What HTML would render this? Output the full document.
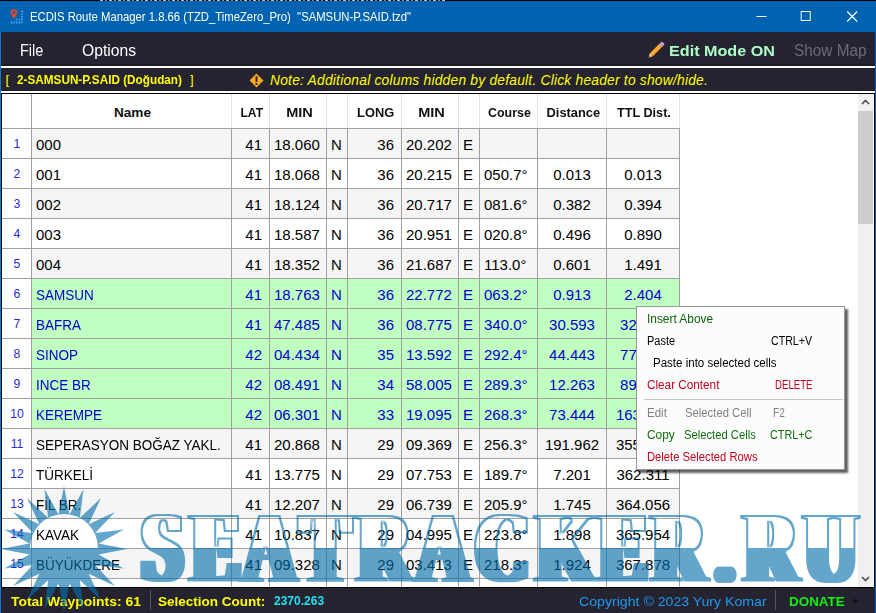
<!DOCTYPE html>
<html lang="en"><head><meta charset="utf-8"><title>ECDIS Route Manager</title>
<style>
*{box-sizing:border-box;margin:0;padding:0}
html,body{width:876px;height:613px;overflow:hidden;background:#0063b1;font-family:"Liberation Sans",sans-serif}
#win{position:absolute;left:0;top:0;width:876px;height:613px;overflow:hidden;background:#0063b1}#lb{left:0;top:32px;width:1px;height:581px;background:#1478cc}
.abs{position:absolute}
#topstrip{left:0;top:0;width:876px;height:1px;background:#000}
#topdots{left:100px;top:0;width:345px;height:1px;background:repeating-linear-gradient(90deg,#bbb 0 3px,#111 3px 5px,#888 5px 7px,#000 7px 9px)}
#title{left:0;top:1px;width:876px;height:31px;background:#0063b1;color:#fff}
#title .t{position:absolute;left:30px;top:0;line-height:33px;font-size:12.4px;white-space:pre;transform-origin:0 50%;transform:scaleX(.912)}
#menubar{left:1px;top:32px;width:874px;height:34px;background:#25232f;border-bottom:2px solid #1c1b24;color:#fff}
#menubar span{position:absolute;top:0;line-height:37px;font-size:15.2px;white-space:pre;transform-origin:0 50%}
#wl1{left:1px;top:66px;width:874px;height:2px;background:#fff}
#routebar{left:1px;top:68px;width:874px;height:23px;background:#25232f;border-bottom:1px solid #1c1b24;color:#ffff00}
#routebar span{position:absolute;top:0;line-height:24px;white-space:pre;transform-origin:0 50%}
#wl2{left:1px;top:91px;width:874px;height:2px;background:#fff}
#grid{left:1px;top:93px;width:874px;height:495px;background:#fff;border:1px solid #000;border-right:1px solid #000;overflow:hidden}
#gi{position:absolute;left:-2px;top:-94px;width:876px;height:613px}
.hc{position:absolute;top:94px;height:34px;line-height:37px;padding-left:2px;text-align:center;font-weight:bold;font-size:13.6px;color:#111;white-space:pre}
.hc b{display:inline-block}.hv{position:absolute;top:94px;width:1px;height:34px;background:#e2e2e2}
#hline{left:2px;top:128px;width:678px;height:1px;background:#a0a0a0}
.row{position:absolute;left:0;width:680px;height:30px;border-bottom:1px solid #a0a0a0;color:#000}
.row .bg{position:absolute;left:32px;top:0;width:647px;height:29px}
.row.odd .bg{background:#f5f5f5}
.row.sel .bg{background:#c0ffc0}
.row.sel{color:#0000cd}
.rh{position:absolute;left:2px;width:29px;top:0;height:29px;line-height:31px;text-align:center;color:#2828e0;font-size:12.2px;background:#fff;padding-left:1px}
.c{position:absolute;top:0;height:29px;line-height:31px;font-size:15px;white-space:pre;padding:0 4px}
.c.al{text-align:left}.c i{font-style:normal;display:inline-block;transform:scaleX(.9);transform-origin:0 50%}.c.ar{text-align:right;padding-right:7px}.c.ac{text-align:center}
.v{position:absolute;top:129px;width:1px;height:460px;background:#a0a0a0}
#sb{left:858px;top:94px;width:15px;height:493px;background:#f0f0f0}
#thumb{left:858px;top:111px;width:15px;height:113px;background:#cdcdcd}
#status{left:1px;top:588px;width:874px;height:25px;background:#25232f;color:#ffff00}
#status span{position:absolute;top:0;line-height:27px;white-space:pre;transform-origin:0 50%}
.sep{position:absolute;width:1px;background:#55545e}
#ctx{left:636px;top:306px;width:209px;height:164px;background:#fcfcfc;border:1px solid #979797;box-shadow:3px 3px 2px rgba(0,0,0,.62);font-size:12px}
#ctx span{position:absolute;line-height:22px;white-space:pre;transform-origin:0 50%}
#ctx .s{position:absolute;left:7px;top:92px;width:199px;height:1px;background:#c8c8c8}
</style></head><body>
<div id="win">
<div id="topstrip" class="abs"></div><div id="lb" class="abs"></div><div id="topdots" class="abs"></div>
<div id="title" class="abs">
<svg class="abs" style="left:9px;top:7px" width="16" height="17" viewBox="0 0 16 17"><path d="M5 1.2a3.3 3.3 0 0 1 3.3 3.3c0 2.2-3.3 6-3.3 6s-3.3-3.800-3.300-6a3.300 3.300 0 0 1 3.300-3.300z" fill="#e8461e"/><circle cx="5" cy="4.400" r="1.300" fill="#0063b1"/><path d="M2 14.500h11M13 14.500v-12" stroke="#5cabf5" stroke-width="1.800" stroke-dasharray="1.300 1.300" fill="none"/><path d="M7 11.500h4" stroke="#5cabf5" stroke-width="1.500" stroke-dasharray="1.300 1.300"/></svg>
<div class="t">ECDIS Route Manager 1.8.66 (TZD_TimeZero_Pro)  "SAMSUN-P.SAID.tzd"</div>
<svg class="abs" style="left:740px;top:0" width="136" height="31" viewBox="0 0 136 31"><path d="M16.500 15.500h10" stroke="#fff" stroke-width="1"/><rect x="61.200" y="10.500" width="9" height="9" fill="none" stroke="#fff" stroke-width="1"/><path d="M107.200 10.500l10 10M117.200 10.500l-10 10" stroke="#fff" stroke-width="1.100"/></svg>
</div>
<div id="menubar" class="abs">
<span style="left:19px;transform:scaleX(0.903);font-size:16px">File</span><span style="left:81px;transform:scaleX(0.98);font-size:16px">Options</span>
<svg class="abs" style="left:646px;top:9px" width="18" height="18" viewBox="0 0 18 18"><path d="M2.800 12.300L11.800 3.300l3 3L5.800 15.300z" fill="#ffa01e"/><path d="M4 13.500L13 4.500" stroke="#ffc060" stroke-width="1"/><path d="M11.800 3.300l1.300-1.300 3 3-1.300 1.300z" fill="#b8b8c0"/><path d="M13.100 2l1-1a1 1 0 0 1 1.400 0l1.600 1.600a1 1 0 0 1 0 1.400l-1 1z" fill="#e88fd0"/><path d="M2.800 12.300l3 3-4.200 1.200z" fill="#f3c98a"/><path d="M1.600 16.500l0.400-1.600 1.200 1.200z" fill="#555"/></svg>
<span style="left:668px;font-weight:bold;color:#aefcc8;transform:scaleX(1.064)">Edit Mode ON</span>
<span style="left:793px;color:#6b6a76;transform:scaleX(0.959);font-size:16px">Show Map</span>
</div>
<div id="wl1" class="abs"></div>
<div id="routebar" class="abs">
<span style="left:4.500px;font-size:13px">[</span><span style="left:16px;font-weight:bold;font-size:12.6px;transform:scaleX(0.933)">2-SAMSUN-P.SAID (Doğudan)</span><span style="left:189px;font-size:13px">]</span>
<svg class="abs" style="left:248px;top:4.500px" width="15" height="15" viewBox="0 0 16 16"><path d="M8 0.500L15.500 8 8 15.500 0.500 8z" fill="#f5a623"/><rect x="7" y="3.500" width="2" height="6" fill="#25232f"/><rect x="7" y="10.800" width="2" height="2" fill="#25232f"/></svg>
<span style="left:269px;font-style:italic;font-size:13.8px;letter-spacing:.22px;line-height:26px">Note: Additional colums hidden by default. Click header to show/hide.</span>
</div>
<div id="wl2" class="abs"></div>
<div id="grid" class="abs"><div id="gi">
<div class="row odd" style="top:129px"><div class="bg"></div><div class="rh">1</div><div class="c al" style="left:32px;width:199px">000</div><div class="c ar" style="left:232px;width:37px">41</div><div class="c al" style="left:270px;width:56px">18.060</div><div class="c al" style="left:327px;width:20px">N</div><div class="c ar" style="left:348px;width:53px">36</div><div class="c al" style="left:402px;width:56px">20.202</div><div class="c al" style="left:459px;width:20px">E</div><div class="c al" style="left:480px;width:57px"></div><div class="c ac" style="left:538px;width:68px"></div><div class="c ac" style="left:607px;width:72px"></div></div>
<div class="row" style="top:159px"><div class="bg"></div><div class="rh">2</div><div class="c al" style="left:32px;width:199px">001</div><div class="c ar" style="left:232px;width:37px">41</div><div class="c al" style="left:270px;width:56px">18.068</div><div class="c al" style="left:327px;width:20px">N</div><div class="c ar" style="left:348px;width:53px">36</div><div class="c al" style="left:402px;width:56px">20.215</div><div class="c al" style="left:459px;width:20px">E</div><div class="c al" style="left:480px;width:57px">050.7°</div><div class="c ac" style="left:538px;width:68px">0.013</div><div class="c ac" style="left:607px;width:72px">0.013</div></div>
<div class="row odd" style="top:189px"><div class="bg"></div><div class="rh">3</div><div class="c al" style="left:32px;width:199px">002</div><div class="c ar" style="left:232px;width:37px">41</div><div class="c al" style="left:270px;width:56px">18.124</div><div class="c al" style="left:327px;width:20px">N</div><div class="c ar" style="left:348px;width:53px">36</div><div class="c al" style="left:402px;width:56px">20.717</div><div class="c al" style="left:459px;width:20px">E</div><div class="c al" style="left:480px;width:57px">081.6°</div><div class="c ac" style="left:538px;width:68px">0.382</div><div class="c ac" style="left:607px;width:72px">0.394</div></div>
<div class="row" style="top:219px"><div class="bg"></div><div class="rh">4</div><div class="c al" style="left:32px;width:199px">003</div><div class="c ar" style="left:232px;width:37px">41</div><div class="c al" style="left:270px;width:56px">18.587</div><div class="c al" style="left:327px;width:20px">N</div><div class="c ar" style="left:348px;width:53px">36</div><div class="c al" style="left:402px;width:56px">20.951</div><div class="c al" style="left:459px;width:20px">E</div><div class="c al" style="left:480px;width:57px">020.8°</div><div class="c ac" style="left:538px;width:68px">0.496</div><div class="c ac" style="left:607px;width:72px">0.890</div></div>
<div class="row odd" style="top:249px"><div class="bg"></div><div class="rh">5</div><div class="c al" style="left:32px;width:199px">004</div><div class="c ar" style="left:232px;width:37px">41</div><div class="c al" style="left:270px;width:56px">18.352</div><div class="c al" style="left:327px;width:20px">N</div><div class="c ar" style="left:348px;width:53px">36</div><div class="c al" style="left:402px;width:56px">21.687</div><div class="c al" style="left:459px;width:20px">E</div><div class="c al" style="left:480px;width:57px">113.0°</div><div class="c ac" style="left:538px;width:68px">0.601</div><div class="c ac" style="left:607px;width:72px">1.491</div></div>
<div class="row sel" style="top:279px"><div class="bg"></div><div class="rh">6</div><div class="c al" style="left:32px;width:199px"><i>SAMSUN</i></div><div class="c ar" style="left:232px;width:37px">41</div><div class="c al" style="left:270px;width:56px">18.763</div><div class="c al" style="left:327px;width:20px">N</div><div class="c ar" style="left:348px;width:53px">36</div><div class="c al" style="left:402px;width:56px">22.772</div><div class="c al" style="left:459px;width:20px">E</div><div class="c al" style="left:480px;width:57px">063.2°</div><div class="c ac" style="left:538px;width:68px">0.913</div><div class="c ac" style="left:607px;width:72px">2.404</div></div>
<div class="row sel" style="top:309px"><div class="bg"></div><div class="rh">7</div><div class="c al" style="left:32px;width:199px"><i>BAFRA</i></div><div class="c ar" style="left:232px;width:37px">41</div><div class="c al" style="left:270px;width:56px">47.485</div><div class="c al" style="left:327px;width:20px">N</div><div class="c ar" style="left:348px;width:53px">36</div><div class="c al" style="left:402px;width:56px">08.775</div><div class="c al" style="left:459px;width:20px">E</div><div class="c al" style="left:480px;width:57px">340.0°</div><div class="c ac" style="left:538px;width:68px">30.593</div><div class="c ac" style="left:607px;width:72px">32.997</div></div>
<div class="row sel" style="top:339px"><div class="bg"></div><div class="rh">8</div><div class="c al" style="left:32px;width:199px"><i>SINOP</i></div><div class="c ar" style="left:232px;width:37px">42</div><div class="c al" style="left:270px;width:56px">04.434</div><div class="c al" style="left:327px;width:20px">N</div><div class="c ar" style="left:348px;width:53px">35</div><div class="c al" style="left:402px;width:56px">13.592</div><div class="c al" style="left:459px;width:20px">E</div><div class="c al" style="left:480px;width:57px">292.4°</div><div class="c ac" style="left:538px;width:68px">44.443</div><div class="c ac" style="left:607px;width:72px">77.440</div></div>
<div class="row sel" style="top:369px"><div class="bg"></div><div class="rh">9</div><div class="c al" style="left:32px;width:199px"><i>INCE BR</i></div><div class="c ar" style="left:232px;width:37px">42</div><div class="c al" style="left:270px;width:56px">08.491</div><div class="c al" style="left:327px;width:20px">N</div><div class="c ar" style="left:348px;width:53px">34</div><div class="c al" style="left:402px;width:56px">58.005</div><div class="c al" style="left:459px;width:20px">E</div><div class="c al" style="left:480px;width:57px">289.3°</div><div class="c ac" style="left:538px;width:68px">12.263</div><div class="c ac" style="left:607px;width:72px">89.703</div></div>
<div class="row sel" style="top:399px"><div class="bg"></div><div class="rh">10</div><div class="c al" style="left:32px;width:199px"><i>KEREMPE</i></div><div class="c ar" style="left:232px;width:37px">42</div><div class="c al" style="left:270px;width:56px">06.301</div><div class="c al" style="left:327px;width:20px">N</div><div class="c ar" style="left:348px;width:53px">33</div><div class="c al" style="left:402px;width:56px">19.095</div><div class="c al" style="left:459px;width:20px">E</div><div class="c al" style="left:480px;width:57px">268.3°</div><div class="c ac" style="left:538px;width:68px">73.444</div><div class="c ac" style="left:607px;width:72px">163.147</div></div>
<div class="row odd" style="top:429px"><div class="bg"></div><div class="rh">11</div><div class="c al" style="left:32px;width:199px"><i>SEPERASYON BOĞAZ YAKL.</i></div><div class="c ar" style="left:232px;width:37px">41</div><div class="c al" style="left:270px;width:56px">20.868</div><div class="c al" style="left:327px;width:20px">N</div><div class="c ar" style="left:348px;width:53px">29</div><div class="c al" style="left:402px;width:56px">09.369</div><div class="c al" style="left:459px;width:20px">E</div><div class="c al" style="left:480px;width:57px">256.3°</div><div class="c ac" style="left:538px;width:68px">191.962</div><div class="c ac" style="left:607px;width:72px">355.109</div></div>
<div class="row" style="top:459px"><div class="bg"></div><div class="rh">12</div><div class="c al" style="left:32px;width:199px"><i>TÜRKELİ</i></div><div class="c ar" style="left:232px;width:37px">41</div><div class="c al" style="left:270px;width:56px">13.775</div><div class="c al" style="left:327px;width:20px">N</div><div class="c ar" style="left:348px;width:53px">29</div><div class="c al" style="left:402px;width:56px">07.753</div><div class="c al" style="left:459px;width:20px">E</div><div class="c al" style="left:480px;width:57px">189.7°</div><div class="c ac" style="left:538px;width:68px">7.201</div><div class="c ac" style="left:607px;width:72px">362.311</div></div>
<div class="row odd" style="top:489px"><div class="bg"></div><div class="rh">13</div><div class="c al" style="left:32px;width:199px"><i>FİL BR.</i></div><div class="c ar" style="left:232px;width:37px">41</div><div class="c al" style="left:270px;width:56px">12.207</div><div class="c al" style="left:327px;width:20px">N</div><div class="c ar" style="left:348px;width:53px">29</div><div class="c al" style="left:402px;width:56px">06.739</div><div class="c al" style="left:459px;width:20px">E</div><div class="c al" style="left:480px;width:57px">205.9°</div><div class="c ac" style="left:538px;width:68px">1.745</div><div class="c ac" style="left:607px;width:72px">364.056</div></div>
<div class="row" style="top:519px"><div class="bg"></div><div class="rh">14</div><div class="c al" style="left:32px;width:199px"><i>KAVAK</i></div><div class="c ar" style="left:232px;width:37px">41</div><div class="c al" style="left:270px;width:56px">10.837</div><div class="c al" style="left:327px;width:20px">N</div><div class="c ar" style="left:348px;width:53px">29</div><div class="c al" style="left:402px;width:56px">04.995</div><div class="c al" style="left:459px;width:20px">E</div><div class="c al" style="left:480px;width:57px">223.8°</div><div class="c ac" style="left:538px;width:68px">1.898</div><div class="c ac" style="left:607px;width:72px">365.954</div></div>
<div class="row odd" style="top:549px"><div class="bg"></div><div class="rh">15</div><div class="c al" style="left:32px;width:199px"><i>BÜYÜKDERE</i></div><div class="c ar" style="left:232px;width:37px">41</div><div class="c al" style="left:270px;width:56px">09.328</div><div class="c al" style="left:327px;width:20px">N</div><div class="c ar" style="left:348px;width:53px">29</div><div class="c al" style="left:402px;width:56px">03.413</div><div class="c al" style="left:459px;width:20px">E</div><div class="c al" style="left:480px;width:57px">218.3°</div><div class="c ac" style="left:538px;width:68px">1.924</div><div class="c ac" style="left:607px;width:72px">367.878</div></div>
<div class="row" style="top:579px"><div class="bg"></div><div class="rh">16</div><div class="c al" style="left:32px;width:199px"><i>İSTİNYE</i></div><div class="c ar" style="left:232px;width:37px">41</div><div class="c al" style="left:270px;width:56px">06.900</div><div class="c al" style="left:327px;width:20px">N</div><div class="c ar" style="left:348px;width:53px">29</div><div class="c al" style="left:402px;width:56px">03.700</div><div class="c al" style="left:459px;width:20px">E</div><div class="c al" style="left:480px;width:57px">200.1°</div><div class="c ac" style="left:538px;width:68px">2.500</div><div class="c ac" style="left:607px;width:72px">370.378</div></div>
<div class="v" style="left:31px"></div><div class="v" style="left:231px"></div><div class="v" style="left:269px"></div><div class="v" style="left:326px"></div><div class="v" style="left:347px"></div><div class="v" style="left:401px"></div><div class="v" style="left:458px"></div><div class="v" style="left:479px"></div><div class="v" style="left:537px"></div><div class="v" style="left:606px"></div><div class="v" style="left:679px"></div>
<div class="hc" style="left:32px;width:199px"><b style="transform:scaleX(1)">Name</b></div>
<div class="hc" style="left:232px;width:37px"><b style="transform:scaleX(0.89)">LAT</b></div>
<div class="hc" style="left:270px;width:56px"><b style="transform:scaleX(1.07)">MIN</b></div>
<div class="hc" style="left:327px;width:20px"></div>
<div class="hc" style="left:348px;width:53px"><b style="transform:scaleX(0.945)">LONG</b></div>
<div class="hc" style="left:402px;width:56px"><b style="transform:scaleX(1.07)">MIN</b></div>
<div class="hc" style="left:459px;width:20px"></div>
<div class="hc" style="left:480px;width:57px"><b style="transform:scaleX(0.915)">Course</b></div>
<div class="hc" style="left:538px;width:68px"><b style="transform:scaleX(0.945)">Distance</b></div>
<div class="hc" style="left:607px;width:72px"><b style="transform:scaleX(0.93)">TTL Dist.</b></div>
<div class="hv" style="left:31px;background:#a0a0a0"></div>
<div class="hv" style="left:231px"></div>
<div class="hv" style="left:269px"></div>
<div class="hv" style="left:326px"></div>
<div class="hv" style="left:347px"></div>
<div class="hv" style="left:401px"></div>
<div class="hv" style="left:458px"></div>
<div class="hv" style="left:479px"></div>
<div class="hv" style="left:537px"></div>
<div class="hv" style="left:606px"></div>
<div class="hv" style="left:679px"></div>
<div id="hline" class="abs"></div>
<div id="sb" class="abs"></div><div id="thumb" class="abs"></div>
<svg class="abs" style="left:858px;top:94px" width="15" height="17" viewBox="0 0 15 17"><path d="M4 10l3.500-3.500 3.500 3.500" fill="none" stroke="#505050" stroke-width="1.600"/></svg>
<svg class="abs" style="left:858px;top:570px" width="15" height="17" viewBox="0 0 15 17"><path d="M4 7l3.500 3.500 3.500-3.500" fill="none" stroke="#505050" stroke-width="1.600"/></svg>
</div></div>
<div id="status" class="abs">
<span style="left:10px;font-weight:bold;font-size:13.4px;transform:scaleX(1.04)">Total Waypoints: 61</span>
<div class="sep" style="left:149px;top:2px;height:20px"></div>
<span style="left:156.500px;font-weight:bold;font-size:13.6px;transform:scaleX(0.994)">Selection Count:</span>
<span style="left:272.500px;font-weight:bold;font-size:12.6px;color:#22e0f0;transform:scaleX(.954)">2370.263</span>
<span style="left:577.500px;font-size:13.4px;color:#1e9af0;transform:scaleX(1.055)">Copyright © 2023 Yury Komar</span>
<div class="sep" style="left:774px;top:2px;height:20px"></div>
<span style="left:788px;font-weight:bold;font-size:13.2px;color:#14f014;transform:scaleX(1.018)">DONATE</span>
<svg class="abs" style="left:850px;top:11px" width="9" height="5" viewBox="0 0 9 5"><path d="M1 0.500h7l-3.500 4z" fill="#111"/></svg>
</div>
<div id="ctx" class="abs">
<span style="left:10px;top:1px;color:#0a640a;transform:scaleX(0.99)">Insert Above</span>
<span style="left:10px;top:23px;color:#000;transform:scaleX(0.915)">Paste</span><span style="left:134px;top:23px;color:#000;transform:scaleX(0.886)">CTRL+V</span>
<span style="left:16px;top:45px;color:#000;transform:scaleX(0.96)">Paste into selected cells</span>
<span style="left:10px;top:67px;color:#c4001e;transform:scaleX(0.978)">Clear Content</span><span style="left:138px;top:67px;color:#c4001e;transform:scaleX(0.803)">DELETE</span>
<div class="s"></div>
<span style="left:10px;top:95px;color:#808080;transform:scaleX(0.961)">Edit</span><span style="left:48px;top:95px;color:#808080;transform:scaleX(0.941)">Selected Cell</span><span style="left:136px;top:95px;color:#808080;transform:scaleX(0.843)">F2</span>
<span style="left:10px;top:117px;color:#0f6f0f;transform:scaleX(0.989)">Copy</span><span style="left:47px;top:117px;color:#0f6f0f;transform:scaleX(0.936)">Selected Cells</span><span style="left:133px;top:117px;color:#0f6f0f;transform:scaleX(0.902)">CTRL+C</span>
<span style="left:10px;top:139px;color:#c4001e;transform:scaleX(0.936)">Delete Selected Rows</span>
</div>
<svg class="abs" id="wm" style="left:0;top:480px" width="876" height="133" viewBox="0 480 876 133">
<defs>
<filter id="fat" filterUnits="userSpaceOnUse" x="0" y="480" width="876" height="133" color-interpolation-filters="sRGB">
<feMorphology in="SourceAlpha" operator="dilate" radius="6 0" result="f"/>
<feMorphology in="f" operator="erode" radius="2 2" result="i"/>
<feFlood x="0" y="480" width="876" height="68" flood-color="#000" result="t"/>
<feComposite in="i" in2="t" operator="in" result="h"/>
<feComposite in="f" in2="h" operator="out" result="s"/>
<feFlood flood-color="#056fab" flood-opacity=".62" result="c"/>
<feComposite in="c" in2="s" operator="in"/>
</filter>
</defs>
<path d="M64.0 486.0 L58.5 514.4 L44.5 489.1 L48.1 517.8 L27.0 498.0 L39.3 524.3 L13.0 512.0 L32.8 533.1 L4.1 529.5 L29.4 543.5 L1.0 549.0 L29.4 554.5 L4.1 568.5 L32.8 564.9 L13.0 586.0 L39.3 573.7 L27.0 600.0 L48.1 580.2 L44.5 608.9 L58.5 583.6 L64.0 612.0 L69.5 583.6 L83.5 608.9 L79.9 580.2 L101.0 600.0 L88.7 573.7 L115.0 586.0 L95.2 564.9 L123.9 568.5 L98.6 554.5 L127.0 549.0 L98.6 543.5 L123.9 529.5 L95.2 533.1 L115.0 512.0 L88.7 524.3 L101.0 498.0 L79.9 517.8 L83.5 489.1 L69.5 514.4ZM30 548A34 34 0 0 1 98 548Z" fill="#056fab" fill-opacity=".62" fill-rule="evenodd"/>
<g filter="url(#fat)"><text transform="scale(0.7 1)" x="203.6 274.3 347.9 430.7 512.1 595.7 680.7 767.9 855.7 932.9 1022.9 1064.3 1150.0" y="582" font-family="'Liberation Serif',serif" font-weight="bold" font-size="102">SEATRACKER.RU</text></g>
</svg>
</div>
</body></html>
